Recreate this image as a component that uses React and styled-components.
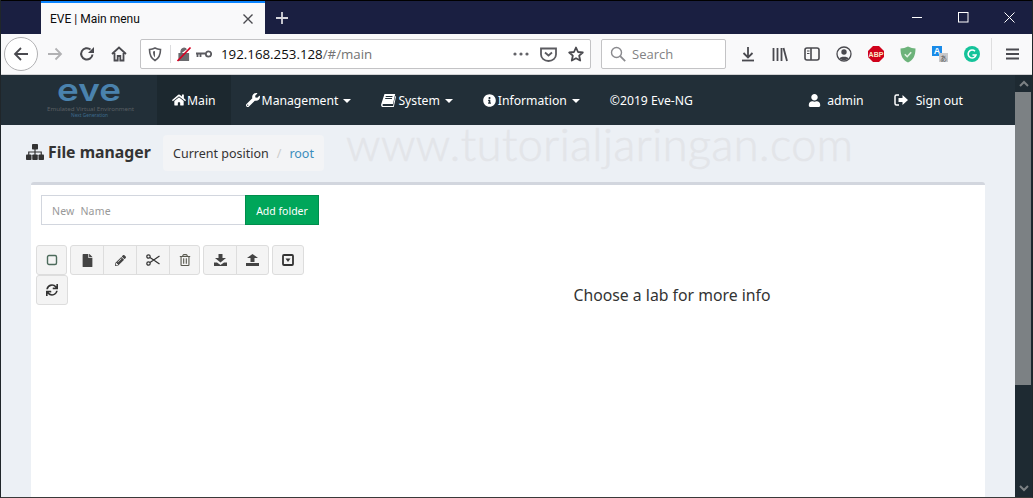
import React from 'react';
import styled, { createGlobalStyle } from 'styled-components';
import { FaHome, FaWrench, FaInfoCircle, FaUser, FaFile, FaPencilAlt, FaRegTrashAlt, FaSync } from 'react-icons/fa';

const Global = createGlobalStyle`
  html, body { margin: 0; padding: 0; overflow: hidden; background: #1a1f41; }
  * { box-sizing: border-box; }
`;

const Win = styled.div`
  width: 1033px; height: 498px; display: flex; flex-direction: column; overflow: hidden;
  border-left: 1px solid #20262a; border-right: 1px solid #20262a; border-bottom: 1px solid #3a3a3a;
  font-family: "Noto Sans", "Open Sans", sans-serif;
`;
const TabStrip = styled.div`
  height: 34px; flex: none; display: flex; align-items: stretch; background: #1a1f41;
  border-top: 1px solid #000; padding-left: 40px; color: #fff;
`;
const Tab = styled.div`
  width: 224px; background: #f9f9fa; border-top: 2px solid #0a84ff; display: flex; align-items: center;
  justify-content: space-between; padding: 1px 11px 0 9px; color: #0c0c0d; font: 12px Roboto, sans-serif;
`;
const NewTab = styled.div`
  width: 34px; display: flex; align-items: center; justify-content: center;
`;
const WinControls = styled.div`
  margin-left: auto; display: flex;
`;
const WinBtn = styled.div`
  width: 46px; display: flex; align-items: center; justify-content: center;
`;
const Toolbar = styled.div`
  height: 41px; flex: none; background: #f9f9fa; display: flex; align-items: center; padding-left: 3px;
  border-bottom: 1px solid #d2d2d4;
`;
const BackBtn = styled.div`
  width: 34px; height: 34px; flex: none; border-radius: 50%; border: 1px solid #b1b1b3; background: #fff;
  display: flex; align-items: center; justify-content: center; margin-right: 1px;
`;
const ToolBtn = styled.div`
  width: ${p => p.$w || 32}px; height: 30px; flex: none; display: flex; align-items: center; justify-content: center;
`;
const Field = styled.div`
  height: 30px; flex: none; width: ${p => p.$w}px; margin-left: ${p => p.$ml}px; background: #fff;
  border: 1px solid #c3c3c5; border-radius: 2px; display: flex; align-items: center;
`;
const UrlHost = styled.span`
  font: 13.3px "Open Sans", sans-serif; color: #0c0c0d; margin-left: 9px;
`;
const UrlPath = styled.span`
  font: 13.3px "Open Sans", sans-serif; color: #737373;
`;
const UrlRight = styled.div`
  margin-left: auto; display: flex; align-items: center; gap: 11px; padding-right: 6px;
`;
const Sep = styled.div`
  width: 1px; height: 18px; background: #dcdcde; margin: 0 5px 0 2px;
`;
const SearchIcon = styled.div`
  display: flex; margin-left: 8px;
`;
const SearchText = styled.span`
  font: 13px "Open Sans", sans-serif; color: #828284; margin-left: 6px;
`;
const KeyGap = styled.div`
  width: 4px; flex: none;
`;
const ToolSpacer = styled.div`
  width: 6px; flex: none;
`;
const ToolSep = styled.div`
  width: 1px; height: 32px; background: #dededf; margin: 0 4px 0 3px; flex: none;
`;
const Page = styled.div`
  flex: 1; min-height: 0; display: flex;
`;
const Scroll = styled.div`
  width: 17px; flex: none; background: #1e2a32; display: flex; flex-direction: column;
`;
const ScrollArrow = styled.div`
  height: 17px; flex: none; display: flex; align-items: center; justify-content: center;
  margin-top: ${p => p.$end ? 'auto' : '0'};
`;
const Thumb = styled.div`
  height: 293px; flex: none; background: #7c8184; margin-right: 1px;
`;
const Content = styled.div`
  flex: 1; min-width: 0; background: #ecf0f5; display: flex; flex-direction: column;
`;
const Nav = styled.nav`
  height: 50px; flex: none; background: #222f38; display: flex; align-items: stretch; padding-left: 44px; padding-right: 37px;
`;
const Logo = styled.div`
  width: 112px; flex: none;
  svg { overflow: visible; }
`;
const NavItem = styled.div`
  display: flex; align-items: center; padding: 0 15px; color: #fff; font-size: 12.2px; gap: ${p => p.$gap || 2}px;
  background: ${p => p.$active ? '#1c282f' : 'transparent'}; white-space: nowrap;
  margin-left: ${p => p.$auto ? 'auto' : '0'};
  svg { flex: none; }
`;
const Caret = styled.span`
  width: 0; height: 0; margin: 1px 0 0 3px; border-top: 4px solid #fff; border-left: 4px solid transparent; border-right: 4px solid transparent;
`;
const SubHead = styled.div`
  height: 57px; flex: none; display: flex; align-items: flex-start; padding: 10px 0 0 25px;
`;
const Title = styled.h1`
  margin: 0; height: 36px; font-size: 15.8px; font-weight: 700; color: #333; display: flex; align-items: center; gap: 4px;
  padding-bottom: 2px; width: 137px; flex: none; white-space: nowrap;
`;
const Crumb = styled.div`
  height: 36px; width: 161px; flex: none; background: #f3f4f6; border-radius: 4px; display: flex; align-items: center;
  padding-left: 10px; font-size: 12.5px; color: #333; white-space: nowrap;
`;
const CrumbSep = styled.span`
  color: #ccc; margin: 0 8px;
`;
const CrumbLink = styled.span`
  color: #3c8dbc;
`;
const Watermark = styled.div`
  margin: -13px 0 0 22px; font: 300 45px/1 Lato, sans-serif; letter-spacing: .5px; color: #e3e5e9; white-space: nowrap;
  -webkit-text-stroke: .6px #e3e5e9;
`;
const Card = styled.div`
  flex: 1; min-height: 0; margin: 0 30px 0 30px; background: #fff; border-top: 3px solid #d2d6de; border-radius: 3px 3px 0 0;
  display: flex;
`;
const Left = styled.div`
  width: 328px; flex: none; padding: 10px 0 0 5px;
`;
const Right = styled.div`
  flex: 1; text-align: center; padding-top: 99px; font-size: 15.8px; line-height: 22px; color: #333;
`;
const FolderForm = styled.div`
  display: flex; height: 30px; margin: 0 0 20px 5px;
`;
const NameInput = styled.input`
  width: 204px; height: 30px; border: 1px solid #d2d6de; border-right: 0; padding: 2px 10px 0; font: 10.5px "Noto Sans", sans-serif;
  letter-spacing: .2px; outline: none; background: #fff;
  &::placeholder { color: #999; opacity: 1; }
`;
const AddBtn = styled.div`
  width: 74px; height: 30px; background: #00a65a; border: 1px solid #008d4c; color: #fff; font-size: 10.5px; padding-top: 1px;
  display: flex; align-items: center; justify-content: center;
`;
const BtnBar = styled.div`
  display: flex; flex-wrap: wrap; width: 290px; column-gap: 3px;
`;
const BtnGroup = styled.div`
  display: flex;
`;
const Btn = styled.div`
  width: ${p => p.$w}px; height: 30px; background: #f4f4f4; border: 1px solid #ddd; margin-left: ${p => p.$first ? 0 : -1}px;
  border-radius: ${p => p.$first && p.$last ? '3px' : p.$first ? '3px 0 0 3px' : p.$last ? '0 3px 3px 0' : '0'};
  display: flex; align-items: center; justify-content: center; color: #444;
`;

const S = ({ w = 16, h = 16, children }) => (
  <svg width={w} height={h} viewBox={`0 0 ${w} ${h}`} fill="none">{children}</svg>
);
const c = '#4a4a4f';

const GroupBtn = ({ w, first, last, children }) => <Btn $w={w} $first={first} $last={last}>{children}</Btn>;

const Book = () => (
  <S w={15} h={14}>
    <path d="M3.5 1h10.700l-2.200 10H2.200c-.9 0-1 1.900.3 1.900h9.600l2.200-10 .7.500-2.200 10.600H2C.6 14-.2 12.700.2 11.200z" fill="#fff" />
    <path d="M4.700 3.500h6.800M4.200 5.500h6.800" stroke="#222f38" strokeWidth="1" />
  </S>
);

const SignOut = () => (
  <S w={14} h={12}>
    <path d="M5 1H2.500A1.500 1.500 0 0 0 1 2.500v7A1.500 1.500 0 0 0 2.500 11H5" stroke="#fff" strokeWidth="1.500" />
    <path d="M4.500 4H8.500V1L14 6 8.500 11V8H4.500z" fill="#fff" />
  </S>
);

const Sitemap = () => (
  <S w={18} h={16}>
    <rect x="6" y="0" width="6" height="5.500" rx=".8" fill="#333" />
    <rect x="0" y="10.500" width="5.500" height="5.500" rx=".8" fill="#333" />
    <rect x="6.250" y="10.500" width="5.500" height="5.500" rx=".8" fill="#333" />
    <rect x="12.500" y="10.500" width="5.500" height="5.500" rx=".8" fill="#333" />
    <path d="M9 5v6M2.750 11V8h12.500v3" stroke="#333" strokeWidth="1.200" />
  </S>
);

export default function App() {
  return (
    <Win>
      <Global />
      <TabStrip>
        <Tab>
          <span>EVE | Main menu</span>
          <S w={12} h={12}><path d="M1.500 1.500l9 9M10.500 1.500l-9 9" stroke="#4a4a4f" strokeWidth="1.400" /></S>
        </Tab>
        <NewTab><S w={14} h={14}><path d="M7 1v12M1 7h12" stroke="#d6d6dc" strokeWidth="1.800" /></S></NewTab>
        <WinControls>
          <WinBtn><S w={11} h={11}><path d="M0 5.500h10" stroke="#fff" /></S></WinBtn>
          <WinBtn><S w={11} h={11}><rect x=".5" y=".5" width="9.500" height="9.500" stroke="#fff" /></S></WinBtn>
          <WinBtn><S w={11} h={11}><path d="M.5.500l10 10M10.500.500l-10 10" stroke="#fff" /></S></WinBtn>
        </WinControls>
      </TabStrip>
      <Toolbar>
        <BackBtn>
          <S w={16} h={16}><path d="M15 8H2M8 2L2 8l6 6" stroke={c} strokeWidth="1.800" /></S>
        </BackBtn>
        <ToolBtn><S w={16} h={16}><path d="M1 8h13M8.500 2.500L14 8l-5.500 5.500" stroke="#b1b1b3" strokeWidth="1.800" /></S></ToolBtn>
        <ToolBtn><S w={16} h={16}><path d="M13.500 8.500A5.700 5.700 0 1 1 11.500 3.500" stroke={c} strokeWidth="2" /><path d="M15 1v6H9z" fill={c} /></S></ToolBtn>
        <ToolBtn $w={31}><S w={16} h={16}><path d="M1 8l7-6.500L15 8M3.500 7v7.500h3.200V10h2.600v4.500h3.200V7" stroke={c} strokeWidth="1.800" /></S></ToolBtn>
        <Field $w={451} $ml={6}>
          <ToolBtn $w={27}>
            <S w={14} h={15}><path d="M1.500 2.500C4 2.200 5.500 1.700 7 1c1.500.700 3 1.200 5.500 1.500 0 5-1 8.500-5.500 11C2.500 11 1.500 7.500 1.500 2.500z" stroke="#5b5b60" strokeWidth="1.600" /><path d="M7 4v6.500C5.500 9 5 7 5 4.500z" fill="#5b5b60" /></S>
          </ToolBtn>
          <Sep />
          <S w={16} h={16}><path d="M3 7.500h9.500v7H3zM5 7.500V5a3 3 0 0 1 5.500-1.500" fill="#6a6a6e" stroke="#6a6a6e" strokeWidth="1.200" /><path d="M1.500 15L14.500 1.500" stroke="#d70022" strokeWidth="1.800" /></S>
          <KeyGap />
          <S w={16} h={10}><circle cx="12.500" cy="5" r="2.700" stroke="#5b5b60" strokeWidth="1.800" /><path d="M9.500 4.500H0M1.500 4.500V8M4.500 4.500V8" stroke="#5b5b60" strokeWidth="1.800" /></S>
          <UrlHost>192.168.253.128<UrlPath>/#/main</UrlPath></UrlHost>
          <UrlRight>
            <S w={16} h={4}><circle cx="2" cy="2" r="1.600" fill="#636368" /><circle cx="8" cy="2" r="1.600" fill="#636368" /><circle cx="14" cy="2" r="1.600" fill="#636368" /></S>
            <S w={17} h={16}><path d="M1 2.500h15v6a7.500 6.500 0 0 1-15 0z" stroke="#5b5b60" strokeWidth="1.800" /><path d="M5 6.500l3.500 3 3.500-3" stroke="#5b5b60" strokeWidth="1.800" /></S>
            <S w={16} h={16}><path d="M8 1.500l2 4.500 4.800.5-3.600 3.200 1 4.800L8 12.200l-4.200 2.300 1-4.800L1.200 6.500 6 6z" stroke="#4a4a4f" strokeWidth="1.800" strokeLinejoin="round" /></S>
          </UrlRight>
        </Field>
        <Field $w={125} $ml={10}>
          <SearchIcon>
            <S w={16} h={16}><circle cx="6.500" cy="6.500" r="5" stroke="#8a8a8e" strokeWidth="1.400" /><path d="M10.200 10.200l5 5" stroke="#8a8a8e" strokeWidth="1.800" /></S>
          </SearchIcon>
          <SearchText>Search</SearchText>
        </Field>
        <ToolSpacer />
        <ToolBtn><S w={14} h={16}><path d="M7 1v10M2.500 7L7 11.500 11.500 7" stroke={c} strokeWidth="1.800" /><path d="M1 14.500h12" stroke={c} strokeWidth="1.800" /></S></ToolBtn>
        <ToolBtn><S w={16} h={15}><path d="M1.500 1v13M5.500 1v13M9.500 1v13M11.500 1l3.500 13" stroke={c} strokeWidth="1.800" /></S></ToolBtn>
        <ToolBtn><S w={16} h={14}><rect x="1" y="1" width="14" height="12" rx="2" stroke={c} strokeWidth="1.600" /><path d="M7 1v12" stroke={c} strokeWidth="1.600" /><path d="M3 4h2.500M3 6.500h2.500" stroke={c} /></S></ToolBtn>
        <ToolBtn><S w={16} h={16}><circle cx="8" cy="8" r="7" stroke={c} strokeWidth="1.300" /><circle cx="8" cy="6" r="2.700" fill={c} /><path d="M3.500 12.500c.5-2.500 8.500-2.500 9 0-2 2-7 2-9 0z" fill={c} /></S></ToolBtn>
        <ToolBtn><S w={16} h={16}><path d="M5 0h6l5 5v6l-5 5H5l-5-5V5z" fill="#d0021b" /><text x="8" y="10.500" textAnchor="middle" fontFamily="Liberation Sans" fontWeight="700" fontSize="7" fill="#fbe9c8">ABP</text></S></ToolBtn>
        <ToolBtn><S w={16} h={17}><path d="M8 .500C5.500 1.800 3 2.400.500 2.500c0 7 2 11.500 7.500 14 5.500-2.500 7.500-7 7.500-14C13 2.400 10.500 1.800 8 .500z" fill="#6db37a" /><path d="M4.800 8.300l2.400 2.400 4-4.500" stroke="#e4f2e6" strokeWidth="1.600" /></S></ToolBtn>
        <ToolBtn><S w={16} h={16}><rect x="0" y="0" width="10" height="10" fill="#1a8be8" /><text x="5" y="8" textAnchor="middle" fontFamily="Liberation Sans" fontWeight="700" fontSize="9" fill="#fff">A</text><rect x="7" y="7" width="9" height="9" fill="#c8c8ca" /><text x="11.500" y="14.500" textAnchor="middle" fontFamily="Noto Sans CJK SC" fontSize="7" fill="#555">あ</text></S></ToolBtn>
        <ToolBtn><S w={16} h={16}><circle cx="8" cy="8" r="8" fill="#15c39a" /><path d="M11 5.200A4 4 0 1 0 12 9H8.500" stroke="#fff" strokeWidth="1.600" /></S></ToolBtn>
        <ToolSep />
        <ToolBtn><S w={13} h={12}><path d="M0 1.500h13M0 6h13M0 10.500h13" stroke={c} strokeWidth="1.800" /></S></ToolBtn>
      </Toolbar>
      <Page>
        <Content>
          <Nav>
            <Logo>
              <S w={96} h={50}>
                <text x="12" y="26" fontFamily="Inter" fontWeight="600" fontSize="31" fill="#4a82ad" textLength="64" lengthAdjust="spacingAndGlyphs">eve</text>
                <text x="2" y="35.500" fontFamily="Noto Sans" fontSize="5.600" fill="#5a5f63" textLength="87" lengthAdjust="spacingAndGlyphs">Emulated Virtual Environment</text>
                <text x="26" y="41.500" fontFamily="Noto Sans" fontSize="4.500" fill="#3d6a8d" textLength="37" lengthAdjust="spacingAndGlyphs">Next Generation</text>
              </S>
            </Logo>
            <NavItem $active $gap={1}><FaHome size={14} />Main</NavItem>
            <NavItem><FaWrench size={14} />Management<Caret /></NavItem>
            <NavItem><Book />System<Caret /></NavItem>
            <NavItem><FaInfoCircle size={13} />Information<Caret /></NavItem>
            <NavItem>©2019 Eve-NG</NavItem>
            <NavItem $auto $gap={6}><FaUser size={13} />admin</NavItem>
            <NavItem $gap={8}><SignOut />Sign out</NavItem>
          </Nav>
          <SubHead>
            <Title><Sitemap />File manager</Title>
            <Crumb>Current position<CrumbSep>/</CrumbSep><CrumbLink>root</CrumbLink></Crumb>
            <Watermark>www.tutorialjaringan.com</Watermark>
          </SubHead>
          <Card>
            <Left>
              <FolderForm>
                <NameInput placeholder="New  Name" />
                <AddBtn>Add folder</AddBtn>
              </FolderForm>
              <BtnBar>
                <BtnGroup>
                  <GroupBtn w={31} first last>
                    <S w={12} h={12}><rect x="1.500" y="1.500" width="9" height="9" rx="1.500" stroke="#4d6b5c" strokeWidth="1.400" /></S>
                  </GroupBtn>
                </BtnGroup>
                <BtnGroup>
                  <GroupBtn w={34} first><FaFile size={13} color="#444" /></GroupBtn>
                  <GroupBtn w={34}><FaPencilAlt size={11} color="#444" /></GroupBtn>
                  <GroupBtn w={34}>
                    <S w={14} h={12}><circle cx="2.500" cy="2.500" r="1.700" stroke="#333" strokeWidth="1.200" /><circle cx="2.500" cy="9.500" r="1.700" stroke="#333" strokeWidth="1.200" /><path d="M4 3.500L13.500 10M4 8.500L13.500 2" stroke="#333" strokeWidth="1.200" /></S>
                  </GroupBtn>
                  <GroupBtn w={31} last><FaRegTrashAlt size={12} color="#5a5a50" /></GroupBtn>
                </BtnGroup>
                <BtnGroup>
                  <GroupBtn w={34} first>
                    <S w={13} h={12}><path d="M4.500 0h4v4H12L6.500 8.500 1 4h3.500z" fill="#444" /><path d="M0 8.500h3L6.500 11 10 8.500h3V12H0z" fill="#444" /></S>
                  </GroupBtn>
                  <GroupBtn w={33} last>
                    <S w={13} h={12}><path d="M4.500 8V4H1L6.500 0 12 4H8.500v4z" fill="#444" /><path d="M0 9h13v3H0z" fill="#444" /></S>
                  </GroupBtn>
                </BtnGroup>
                <BtnGroup>
                  <GroupBtn w={32} first last>
                    <S w={12} h={12}><rect x="1" y="1" width="10" height="10" rx="1" stroke="#333" strokeWidth="1.800" /><path d="M3.500 4.500h5L6 8z" fill="#333" /></S>
                  </GroupBtn>
                </BtnGroup>
                <BtnGroup>
                  <GroupBtn w={32} first last><FaSync size={12} color="#333" /></GroupBtn>
                </BtnGroup>
              </BtnBar>
            </Left>
            <Right>Choose a lab for more info</Right>
          </Card>
        </Content>
        <Scroll>
          <ScrollArrow><S w={10} h={7}><path d="M1 6l4-4 4 4" stroke="#7c8184" strokeWidth="2" /></S></ScrollArrow>
          <Thumb />
          <ScrollArrow $end><S w={10} h={7}><path d="M1 1l4 4 4-4" stroke="#7c8184" strokeWidth="2" /></S></ScrollArrow>
        </Scroll>
      </Page>
    </Win>
  );
}
